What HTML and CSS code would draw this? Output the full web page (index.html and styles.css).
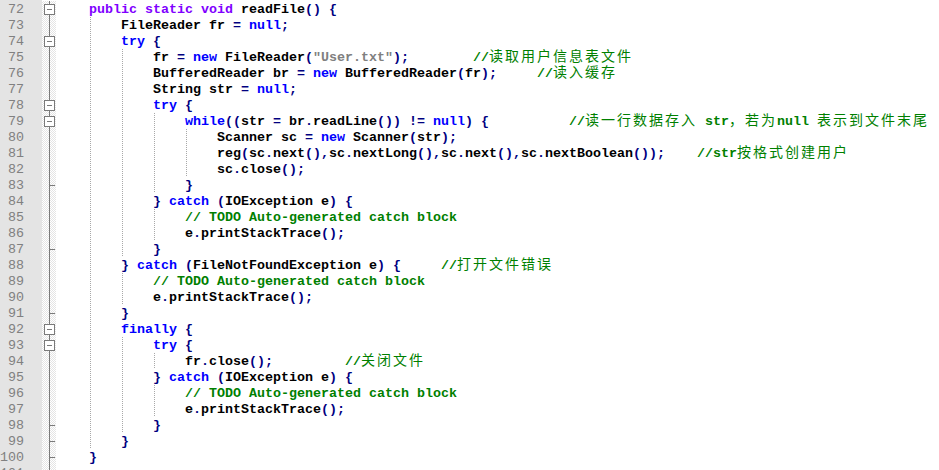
FILE: index.html
```html
<!DOCTYPE html>
<html lang="zh">
<head>
<meta charset="utf-8">
<title>readFile</title>
<link rel="stylesheet" href="styles.css">
</head>
<body>
<div class="editor">
<div class="row"><span class="num">72</span><span class="fold"><span class="box"></span></span><span class="code">    <i class="t">public</i> <i class="t">static</i> <i class="t">void</i> readFile<i class="o">()</i> <i class="o">{</i></span></div>
<div class="row"><span class="num">73</span><span class="fold"></span><span class="code g1">        FileReader fr <i class="o">=</i> <i class="k">null</i><i class="o">;</i></span></div>
<div class="row"><span class="num">74</span><span class="fold"><span class="box"></span></span><span class="code g1">        <i class="k">try</i> <i class="o">{</i></span></div>
<div class="row"><span class="num">75</span><span class="fold"></span><span class="code g2">            fr <i class="o">=</i> <i class="k">new</i> FileReader<i class="o">(</i><i class="s">"User.txt"</i><i class="o">);</i>        <i class="c">//<i class="cj">读取用户信息表文件</i></i></span></div>
<div class="row"><span class="num">76</span><span class="fold"></span><span class="code g2">            BufferedReader br <i class="o">=</i> <i class="k">new</i> BufferedReader<i class="o">(</i>fr<i class="o">);</i>     <i class="c">//<i class="cj">读入缓存</i></i></span></div>
<div class="row"><span class="num">77</span><span class="fold"></span><span class="code g2">            String str <i class="o">=</i> <i class="k">null</i><i class="o">;</i></span></div>
<div class="row"><span class="num">78</span><span class="fold"><span class="box"></span></span><span class="code g2">            <i class="k">try</i> <i class="o">{</i></span></div>
<div class="row"><span class="num">79</span><span class="fold"><span class="box"></span></span><span class="code g3">                <i class="k">while</i><i class="o">((</i>str <i class="o">=</i> br<i class="o">.</i>readLine<i class="o">())</i> <i class="o">!=</i> <i class="k">null</i><i class="o">)</i> <i class="o">{</i>          <i class="c">//<i class="cj">读一行数据存入</i> str<i class="cj">，若为</i>null <i class="cj">表示到文件末尾</i></i></span></div>
<div class="row"><span class="num">80</span><span class="fold"></span><span class="code g4">                    Scanner sc <i class="o">=</i> <i class="k">new</i> Scanner<i class="o">(</i>str<i class="o">);</i></span></div>
<div class="row"><span class="num">81</span><span class="fold"></span><span class="code g4">                    reg<i class="o">(</i>sc<i class="o">.</i>next<i class="o">(),</i>sc<i class="o">.</i>nextLong<i class="o">(),</i>sc<i class="o">.</i>next<i class="o">(),</i>sc<i class="o">.</i>nextBoolean<i class="o">());</i>    <i class="c">//str<i class="cj">按格式创建用户</i></i></span></div>
<div class="row"><span class="num">82</span><span class="fold"></span><span class="code g4">                    sc<i class="o">.</i>close<i class="o">();</i></span></div>
<div class="row"><span class="num">83</span><span class="fold"><span class="tick"></span></span><span class="code g3">                <i class="o">}</i></span></div>
<div class="row"><span class="num">84</span><span class="fold"></span><span class="code g2">            <i class="o">}</i> <i class="k">catch</i> <i class="o">(</i>IOException e<i class="o">)</i> <i class="o">{</i></span></div>
<div class="row"><span class="num">85</span><span class="fold"></span><span class="code g3">                <i class="c">// TODO Auto-generated catch block</i></span></div>
<div class="row"><span class="num">86</span><span class="fold"></span><span class="code g3">                e<i class="o">.</i>printStackTrace<i class="o">();</i></span></div>
<div class="row"><span class="num">87</span><span class="fold"><span class="tick"></span></span><span class="code g2">            <i class="o">}</i></span></div>
<div class="row"><span class="num">88</span><span class="fold"></span><span class="code g1">        <i class="o">}</i> <i class="k">catch</i> <i class="o">(</i>FileNotFoundException e<i class="o">)</i> <i class="o">{</i>     <i class="c">//<i class="cj">打开文件错误</i></i></span></div>
<div class="row"><span class="num">89</span><span class="fold"></span><span class="code g2">            <i class="c">// TODO Auto-generated catch block</i></span></div>
<div class="row"><span class="num">90</span><span class="fold"></span><span class="code g2">            e<i class="o">.</i>printStackTrace<i class="o">();</i></span></div>
<div class="row"><span class="num">91</span><span class="fold"><span class="tick"></span></span><span class="code g1">        <i class="o">}</i></span></div>
<div class="row"><span class="num">92</span><span class="fold"><span class="box"></span></span><span class="code g1">        <i class="k">finally</i> <i class="o">{</i></span></div>
<div class="row"><span class="num">93</span><span class="fold"><span class="box"></span></span><span class="code g2">            <i class="k">try</i> <i class="o">{</i></span></div>
<div class="row"><span class="num">94</span><span class="fold"></span><span class="code g3">                fr<i class="o">.</i>close<i class="o">();</i>         <i class="c">//<i class="cj">关闭文件</i></i></span></div>
<div class="row"><span class="num">95</span><span class="fold"></span><span class="code g2">            <i class="o">}</i> <i class="k">catch</i> <i class="o">(</i>IOException e<i class="o">)</i> <i class="o">{</i></span></div>
<div class="row"><span class="num">96</span><span class="fold"></span><span class="code g3">                <i class="c">// TODO Auto-generated catch block</i></span></div>
<div class="row"><span class="num">97</span><span class="fold"></span><span class="code g3">                e<i class="o">.</i>printStackTrace<i class="o">();</i></span></div>
<div class="row"><span class="num">98</span><span class="fold"><span class="tick"></span></span><span class="code g2">            <i class="o">}</i></span></div>
<div class="row"><span class="num">99</span><span class="fold"><span class="tick"></span></span><span class="code g1">        <i class="o">}</i></span></div>
<div class="row"><span class="num">100</span><span class="fold"><span class="tick"></span></span><span class="code">    <i class="o">}</i></span></div>
<div class="row"><span class="num">101</span><span class="fold"></span><span class="code"></span></div>
</div>
</body>
</html>
```

FILE: styles.css
```css
html, body {
  margin: 0;
  padding: 0;
  height: 100%;
  overflow: hidden;
  background: #ffffff;
}

.editor {
  padding-top: 1px;
  min-height: 100%;
  box-sizing: border-box;
  background:
    linear-gradient(to right, #e4e4e4 0 42px, transparent 42px),
    #ffffff;
  font-family: "Liberation Mono", "Courier New", monospace;
  font-size: 13.3333px;
}

.row {
  display: grid;
  grid-template-columns: 42px 14px 1fr;
  height: 16px;
  line-height: 16px;
}

.num {
  text-align: right;
  padding-right: 18px;
  padding-top: 1px;
  color: #808080;
  font-weight: normal;
  background: #e4e4e4;
}

.fold {
  display: flex;
  align-items: center;
  background:
    linear-gradient(#7a7a7a, #7a7a7a) 7px 0 / 1px 100% no-repeat,
    repeating-conic-gradient(#e4e4e4 0 25%, #ffffff 0 50%) 0 0 / 2px 2px;
}

.box {
  width: 9px;
  height: 9px;
  margin-left: 2px;
  border: 1px solid #7a7a7a;
  background:
    linear-gradient(#7a7a7a, #7a7a7a) center / 5px 1px no-repeat,
    #ffffff;
}

.tick {
  width: 6px;
  height: 1px;
  margin-left: 7px;
  background: #7a7a7a;
}

.code {
  height: 16px;
  box-sizing: border-box;
  padding-left: 1px;
  padding-top: 1px;
  white-space: pre;
  font-weight: bold;
  color: #000000;
  --gd: linear-gradient(#a8a8a8 50%, transparent 50%);
  background-repeat: repeat-y;
  background-size: 1px 2px;
}

.g1 {
  background-image: var(--gd);
  background-position: 34px 0;
}

.g2 {
  background-image: var(--gd), var(--gd);
  background-position: 34px 0, 66px 0;
}

.g3 {
  background-image: var(--gd), var(--gd), var(--gd);
  background-position: 34px 0, 66px 0, 98px 0;
}

.g4 {
  background-image: var(--gd), var(--gd), var(--gd), var(--gd);
  background-position: 34px 0, 66px 0, 98px 0, 130px 0;
}

.code i {
  font-style: normal;
}

.t { color: #8000ff; }
.k { color: #0000ff; }
.o { color: #000080; }
.s { color: #808080; }
.c { color: #008000; }

.code .cj {
  font-family: "Noto Sans CJK SC", sans-serif;
  font-weight: normal;
  font-size: 14px;
  letter-spacing: 2px;
  line-height: 0;
}
```
